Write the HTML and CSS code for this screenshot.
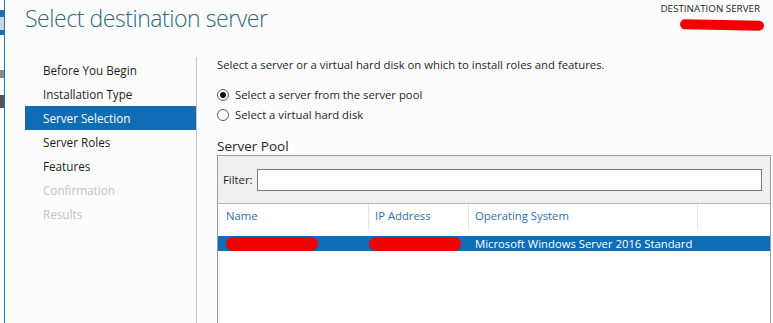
FILE: index.html
```html
<!DOCTYPE html>
<html lang="en">
<head>
  <meta charset="UTF-8" />
  <title>Select destination server</title>
  <link rel="stylesheet" href="styles.css">
</head>
<body>
  <div class="window">
    <div class="edge">
      <span class="chip chip-blue"></span>
      <span class="chip chip-light"></span>
      <span class="chip chip-blue2"></span>
      <span class="chip chip-gray"></span>
      <span class="chip chip-dark"></span>
    </div>
    <div class="wizard">
      <header class="head">
        <h1>Select destination server</h1>
        <div class="dest">
          <span class="dest-label">DESTINATION SERVER</span>
          <span class="scribble scribble-dest"></span>
        </div>
      </header>
      <div class="body">
        <nav class="steps">
          <div class="step">Before You Begin</div>
          <div class="step">Installation Type</div>
          <div class="step active">Server Selection</div>
          <div class="step">Server Roles</div>
          <div class="step">Features</div>
          <div class="step off">Confirmation</div>
          <div class="step off">Results</div>
        </nav>
        <main class="content">
          <p class="intro">Select a server or a virtual hard disk on which to install roles and features.</p>
          <div class="radios">
            <label class="radio"><span class="dot checked"></span>Select a server from the server pool</label>
            <label class="radio"><span class="dot"></span>Select a virtual hard disk</label>
          </div>
          <h2>Server Pool</h2>
          <div class="pool">
            <div class="filter">
              <span>Filter:</span>
              <div class="filter-box"></div>
            </div>
            <div class="cols">
              <div class="col c-name">Name</div>
              <div class="col c-ip">IP Address</div>
              <div class="col c-os">Operating System</div>
              <div class="col c-rest"></div>
            </div>
            <div class="row selected">
              <div class="cell c-name"><span class="scribble scribble-cell"></span></div>
              <div class="cell c-ip"><span class="scribble scribble-cell"></span></div>
              <div class="cell c-os">Microsoft Windows Server 2016 Standard</div>
            </div>
          </div>
        </main>
      </div>
    </div>
  </div>
</body>
</html>
```

FILE: styles.css
```css
* { box-sizing: border-box; margin: 0; padding: 0; }
html, body { height: 100%; overflow: hidden; }
body { background: #fcfcfc; font-family: "Open Sans", "Noto Sans", sans-serif; font-size: 11.3px; color: #1e1e1e; }

.window { display: flex; height: 323px; }

/* cropped neighbour window on the far left */
.edge { width: 5px; border-right: 1px solid #2b76a8; display: flex; flex-direction: column; flex-shrink: 0; }
.chip { display: block; width: 4px; }
.chip-blue { margin-top: 10px; height: 7px; background: #1b6fae; }
.chip-light { height: 13px; background: #c3d7e8; }
.chip-blue2 { height: 5px; background: #1b6fae; }
.chip-gray { margin-top: 35px; height: 8px; background: #8a8a8a; }
.chip-dark { margin-top: 17px; height: 13px; background: #555; }

.wizard { flex: 1; display: flex; flex-direction: column; min-width: 0; }

.head { display: flex; justify-content: space-between; height: 57px; flex-shrink: 0; }
.head h1 { font-weight: 300; font-size: 23px; color: #2f6783; padding: 0 0 0 20px; line-height: 36px; letter-spacing: -0.45px; }
.dest { display: flex; flex-direction: column; align-items: flex-end; padding: 2px 13px 0 0; }
.dest-label { font-size: 9.8px; color: #1e1e1e; line-height: 14px; }

.scribble { display: block; background: #f20000; border-radius: 8px; }
.scribble-dest { width: 84px; height: 10px; margin: 4px -4px 0 0; transform: rotate(1deg); }

.body { flex: 1; display: flex; min-height: 0; overflow: hidden; }

.steps { width: 192px; border-right: 1px solid #c9c9c9; padding: 1px 0 0 20px; flex-shrink: 0; font-size: 11.7px; }
.step { height: 24px; line-height: 24px; padding-left: 18px; color: #1e1e1e; }
.step.active { background: #0f6cb5; color: #fff; }
.step.off { color: #c2c2c2; }

.content { flex: 1; padding: 0 0 0 20px; }
.intro { line-height: 16px; }

.radios { margin-top: 14px; display: flex; flex-direction: column; gap: 4px; }
.radio { display: flex; align-items: center; gap: 6px; line-height: 16px; }
.dot { width: 12px; height: 12px; border: 1px solid #5a5a5a; border-radius: 50%; background: #fff; display: flex; align-items: center; justify-content: center; }
.dot.checked::after { content: ""; width: 6px; height: 6px; border-radius: 50%; background: #111; }

h2 { font-weight: 400; font-size: 13.5px; line-height: 18px; margin-top: 14px; }

.pool { margin-right: 2px; height: 200px; border: 1px solid #9c9c9c; background: #fff; }
.filter { background: #f0f0f0; border-bottom: 1px solid #b8b8b8; height: 48px; display: flex; align-items: center; gap: 4px; padding: 0 8px 0 5px; }
.filter-box { flex: 1; height: 22px; background: #fff; border: 1px solid #7a7a7a; }

.cols { display: flex; height: 26px; }
.col { color: #2f6fa8; line-height: 24px; padding-left: 6px; border-right: 1px solid #e4e4e4; }
.c-name { width: 151px; }
.c-ip { width: 100px; }
.c-os { width: 229px; }
.c-rest { flex: 1; border-right: 0; }
.col.c-name { padding-left: 8px; }

.row { display: flex; height: 15px; margin-top: 6px; }
.row.selected { background: #0f6cb5; color: #fff; }
.cell { line-height: 15px; padding-left: 6px; }
.row .c-os { width: auto; }
.scribble-cell { width: 92px; height: 14px; margin-top: 1px; }
.c-name .scribble-cell { margin-left: 2px; }
.c-ip .scribble-cell { margin-left: -6px; }
```
